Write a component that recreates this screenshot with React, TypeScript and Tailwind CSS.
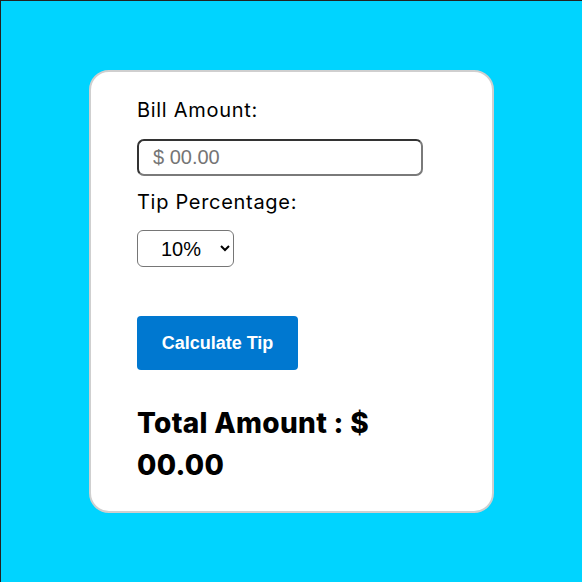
export default function App() {
  return (
    <div className="w-[582px] h-[582px] bg-[#00d4ff] border-t border-l border-[#222] flex items-center justify-center font-['Inter',sans-serif]">
      <div className="w-[405px] bg-white border-2 border-[#cfcfcf] rounded-[20px] pl-[46px] pr-[20px] pt-[23px] pb-[25px] flex flex-col items-start">
        <label className="text-[20px] leading-[30px] tracking-[0.7px] text-black">Bill Amount:</label>
        <input
          type="text"
          placeholder="$ 00.00"
          className="mt-[14px] w-[286px] h-[37px] rounded-[7px] border-2 border-t-[#333] border-l-[#333] border-r-[#7a7a7a] border-b-[#7a7a7a] pl-[14px] text-[20px] font-['Liberation_Sans',Arial,sans-serif] placeholder:text-[#757575] outline-none"
        />
        <label className="mt-[11px] text-[20px] leading-[30px] tracking-[0.7px] text-black">Tip Percentage:</label>
        <select
          defaultValue="10"
          className="mt-[13px] w-[97px] h-[37px] rounded-[6px] border border-[#767676] pl-[19px] pr-[6px] text-[20px] text-black bg-white font-['Liberation_Sans',Arial,sans-serif]"
        >
          <option value="10">10%</option>
          <option value="15">15%</option>
          <option value="20">20%</option>
        </select>
        <button className="mt-[49px] w-[161px] h-[54px] rounded-[4px] bg-[#0078d0] text-white text-[18px] font-bold font-['Liberation_Sans',Arial,sans-serif]">
          Calculate Tip
        </button>
        <h2 className="mt-[32px] text-[28px] leading-[42px] font-extrabold tracking-[0.3px] text-black">
          Total Amount : $<br />00.00
        </h2>
      </div>
    </div>
  );
}
